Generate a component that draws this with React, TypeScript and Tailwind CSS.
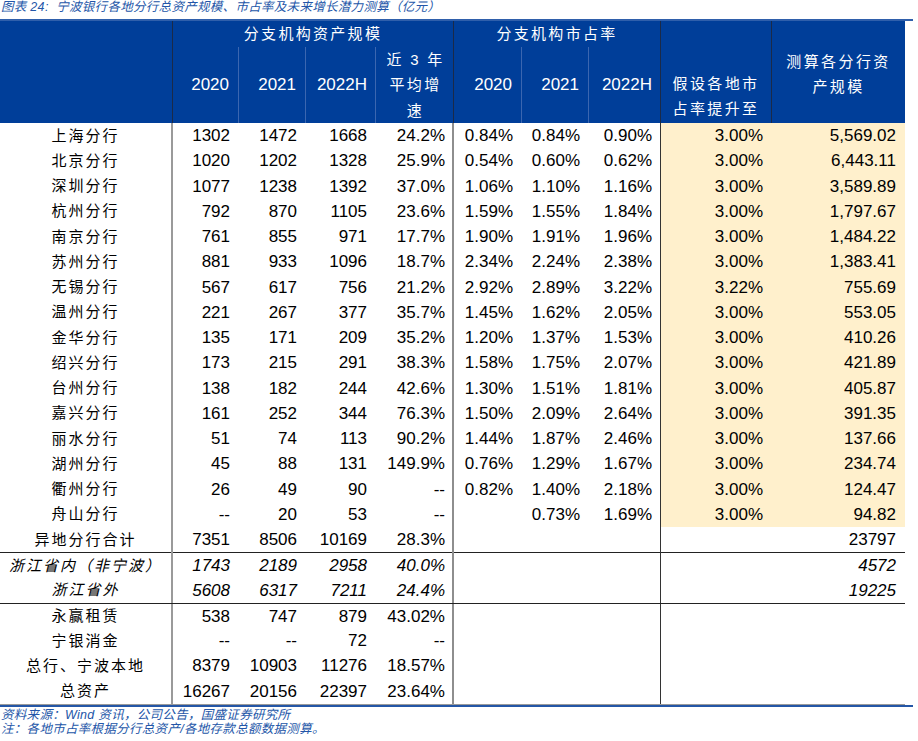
import React from "react";

const COLS =
  "grid grid-cols-[173px_66px_67px_70px_78px_68px_67px_72px_111px_133px]";

type Row = { cells: string[]; hl?: boolean; italic?: boolean; sepTop?: boolean };

const rows: Row[] = [
  { cells: ["上海分行", "1302", "1472", "1668", "24.2%", "0.84%", "0.84%", "0.90%", "3.00%", "5,569.02"], hl: true },
  { cells: ["北京分行", "1020", "1202", "1328", "25.9%", "0.54%", "0.60%", "0.62%", "3.00%", "6,443.11"], hl: true },
  { cells: ["深圳分行", "1077", "1238", "1392", "37.0%", "1.06%", "1.10%", "1.16%", "3.00%", "3,589.89"], hl: true },
  { cells: ["杭州分行", "792", "870", "1105", "23.6%", "1.59%", "1.55%", "1.84%", "3.00%", "1,797.67"], hl: true },
  { cells: ["南京分行", "761", "855", "971", "17.7%", "1.90%", "1.91%", "1.96%", "3.00%", "1,484.22"], hl: true },
  { cells: ["苏州分行", "881", "933", "1096", "18.7%", "2.34%", "2.24%", "2.38%", "3.00%", "1,383.41"], hl: true },
  { cells: ["无锡分行", "567", "617", "756", "21.2%", "2.92%", "2.89%", "3.22%", "3.22%", "755.69"], hl: true },
  { cells: ["温州分行", "221", "267", "377", "35.7%", "1.45%", "1.62%", "2.05%", "3.00%", "553.05"], hl: true },
  { cells: ["金华分行", "135", "171", "209", "35.2%", "1.20%", "1.37%", "1.53%", "3.00%", "410.26"], hl: true },
  { cells: ["绍兴分行", "173", "215", "291", "38.3%", "1.58%", "1.75%", "2.07%", "3.00%", "421.89"], hl: true },
  { cells: ["台州分行", "138", "182", "244", "42.6%", "1.30%", "1.51%", "1.81%", "3.00%", "405.87"], hl: true },
  { cells: ["嘉兴分行", "161", "252", "344", "76.3%", "1.50%", "2.09%", "2.64%", "3.00%", "391.35"], hl: true },
  { cells: ["丽水分行", "51", "74", "113", "90.2%", "1.44%", "1.87%", "2.46%", "3.00%", "137.66"], hl: true },
  { cells: ["湖州分行", "45", "88", "131", "149.9%", "0.76%", "1.29%", "1.67%", "3.00%", "234.74"], hl: true },
  { cells: ["衢州分行", "26", "49", "90", "--", "0.82%", "1.40%", "2.18%", "3.00%", "124.47"], hl: true },
  { cells: ["舟山分行", "--", "20", "53", "--", "", "0.73%", "1.69%", "3.00%", "94.82"], hl: true },
  { cells: ["异地分行合计", "7351", "8506", "10169", "28.3%", "", "", "", "", "23797"] },
  { cells: ["浙江省内（非宁波）", "1743", "2189", "2958", "40.0%", "", "", "", "", "4572"], italic: true, sepTop: true },
  { cells: ["浙江省外", "5608", "6317", "7211", "24.4%", "", "", "", "", "19225"], italic: true },
  { cells: ["永赢租赁", "538", "747", "879", "43.02%", "", "", "", "", ""], sepTop: true },
  { cells: ["宁银消金", "--", "--", "72", "--", "", "", "", "", ""] },
  { cells: ["总行、宁波本地", "8379", "10903", "11276", "18.57%", "", "", "", "", ""] },
  { cells: ["总资产", "16267", "20156", "22397", "23.64%", "", "", "", "", ""] },
];

function cellClass(i: number, hl?: boolean) {
  const base = "flex items-center h-full";
  if (i === 0)
    return `${base} justify-center border-r-2 border-[#9a9a9a] text-[15px] tracking-[2px]`;
  let c = `${base} justify-end text-[17px]`;
  if (i === 4) c += " border-r-2 border-[#8e8e8e] pr-[7px]";
  else if (i === 7) c += " border-r border-[#333333] pr-[8px]";
  else c += " pr-[9px]";
  if ((i === 8 || i === 9) && hl) c += " bg-[#fff0cc]";
  return c;
}

export default function App() {
  return (
    <div
      className="w-[918px] h-[741px] bg-white text-black overflow-hidden"
      style={{ fontFamily: '"Liberation Sans", "Noto Sans CJK SC", sans-serif' }}
    >
      {/* Title */}
      <div className="h-[19px] pl-[1px] text-[12.5px] leading-[15px] italic text-[#2356a8] whitespace-nowrap tracking-[0.3px]">
        图表 24:&nbsp;&nbsp;宁波银行各地分行总资产规模、市占率及未来增长潜力测算（亿元）
      </div>
      <div className="h-[2px] w-[913px] bg-[#2f5fab]" />

      {/* Header */}
      <div className={`${COLS} grid-rows-[26px_76px] w-[905px] bg-[#003e99] text-white`}>
        <div className="row-span-2 border-r border-[#1b2a48]" />
        <div className="col-span-4 flex items-center justify-center text-[15px] tracking-[2.3px] border-r border-[#1b2a48] pt-[1px]">
          分支机构资产规模
        </div>
        <div className="col-span-3 flex items-center justify-center text-[15px] tracking-[2.3px] border-r border-[#1b2a48] pt-[1px]">
          分支机构市占率
        </div>
        <div className="row-span-2 flex flex-col items-center justify-end pb-[2px] text-[15px] tracking-[2.4px] leading-[25px] border-r border-[#1b2a48]">
          <span>假设各地市</span>
          <span>占率提升至</span>
        </div>
        <div className="row-span-2 flex flex-col items-center justify-center pt-[3px] text-[15px] tracking-[2.4px] leading-[25px]">
          <span>测算各分行资</span>
          <span>产规模</span>
        </div>
        {/* second header row */}
        <div className="flex items-center justify-end pr-[9px] text-[17px] border-r border-[#3b66b0]">2020</div>
        <div className="flex items-center justify-end pr-[9px] text-[17px] border-r border-[#3b66b0]">2021</div>
        <div className="flex items-center justify-end pr-[8px] text-[17px] border-r border-[#3b66b0]">2022H</div>
        <div className="flex flex-col items-center justify-center text-[15px] tracking-[2.3px] leading-[25.5px] border-r border-[#1b2a48] pl-[2px]">
          <span>近 3 年</span>
          <span>平均增</span>
          <span>速</span>
        </div>
        <div className="flex items-center justify-end pr-[9px] text-[17px] border-r border-[#3b66b0]">2020</div>
        <div className="flex items-center justify-end pr-[9px] text-[17px] border-r border-[#3b66b0]">2021</div>
        <div className="flex items-center justify-end pr-[8px] text-[17px] border-r border-[#1b2a48]">2022H</div>
      </div>

      {/* Body */}
      <div className="w-[905px]">
        {rows.map((r, ri) => (
          <div
            key={ri}
            className={`${COLS} h-[25.25px] ${r.sepTop ? "border-t border-[#222222]" : ""} ${r.italic ? "italic" : ""}`}
          >
            {r.cells.map((c, i) => (
              <div key={i} className={cellClass(i, r.hl)}>
                {c}
              </div>
            ))}
          </div>
        ))}
        <div className="h-[1px] w-[905px] bg-[#9a9a9a]" />
      </div>
      <div className="h-[2px] w-[913px] bg-[#2456a6]" />

      {/* Footnotes */}
      <div className="pl-[1px] mt-[1px] text-[12.5px] leading-[14px] italic text-[#2356a8] whitespace-nowrap tracking-[0.3px]">
        <div>资料来源：Wind 资讯，公司公告，国盛证券研究所</div>
        <div>注：各地市占率根据分行总资产/各地存款总额数据测算。</div>
      </div>
    </div>
  );
}
